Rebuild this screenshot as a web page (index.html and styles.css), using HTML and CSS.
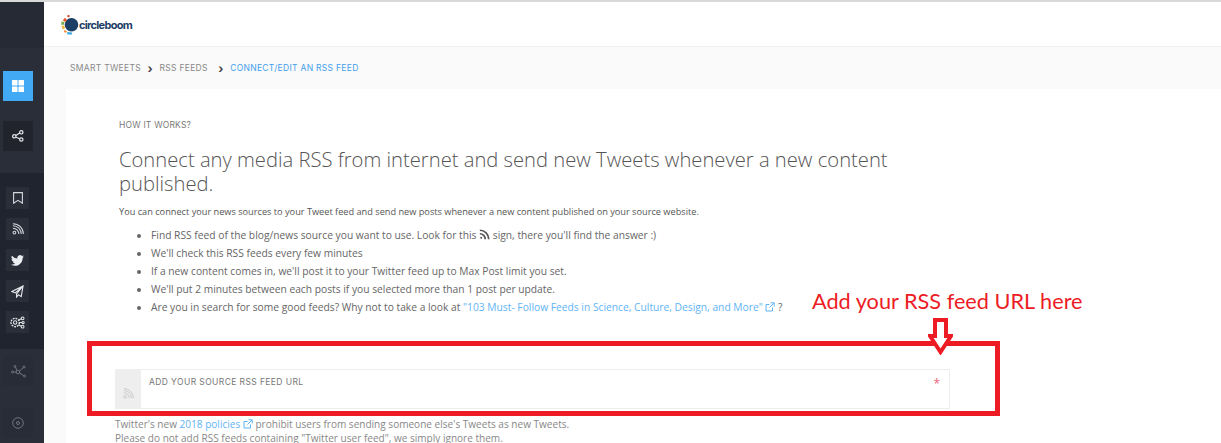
FILE: index.html
```html
<!DOCTYPE html>
<html lang="en">
<head>
    <meta charset="UTF-8">
    <title>Connect/Edit an RSS Feed</title>
    <link rel="stylesheet" href="styles.css">
</head>
<body>

<div class="app">
    <!-- Sidebar -->
    <aside class="sidebar">
        <div class="side-top"></div>
        <div class="side-main">
            <span class="side-btn active">
                <svg width="12" height="12" viewBox="0 0 12 12" fill="#fff"><rect x="0" y="0" width="5.500" height="5.500" rx=".5"/><rect x="6.500" y="0" width="5.500" height="5.500" rx=".5"/><rect x="0" y="6.500" width="5.500" height="5.500" rx=".5"/><rect x="6.500" y="6.500" width="5.500" height="5.500" rx=".5"/></svg>
            </span>
            <span class="side-btn">
                <svg width="12" height="12" viewBox="0 0 12 12" fill="none" stroke="#e4e6ea" stroke-width="1.200"><circle cx="2.300" cy="6.300" r="1.700"/><circle cx="9.300" cy="2.300" r="1.700"/><circle cx="9.300" cy="9.500" r="1.700"/><path d="M3.800 5.500l4-2.400M3.800 7.200l4 1.500"/></svg>
            </span>
        </div>
        <div class="side-sub">
            <span class="sub-btn">
                <svg width="10" height="12" viewBox="0 0 10 12" fill="none" stroke="#d5d7dc" stroke-width="1.100"><path d="M.6.6h8.800v10.600L5 8.300.6 11.200z"/></svg>
            </span>
            <span class="sub-btn">
                <svg width="12" height="12" viewBox="0 0 13 13" fill="none" stroke="#d5d7dc" stroke-width="1.100"><circle cx="2.600" cy="10.400" r="1.500"/><path d="M1 5.600a6.400 6.400 0 0 1 6.400 6.400M1 3a9 9 0 0 1 9 9M1 .7A11.300 11.300 0 0 1 12.300 12"/></svg>
            </span>
            <span class="sub-btn">
                <svg width="13" height="11" viewBox="0 0 24 20" fill="#eceef1"><path d="M24 2.400a10 10 0 0 1-2.800.8A5 5 0 0 0 23.300.5a10 10 0 0 1-3.100 1.200 4.900 4.900 0 0 0-8.400 4.500A14 14 0 0 1 1.700 1a4.900 4.900 0 0 0 1.500 6.600 5 5 0 0 1-2.200-.6c0 2.400 1.700 4.400 4 4.900a5 5 0 0 1-2.200.1 4.900 4.900 0 0 0 4.600 3.400A10 10 0 0 1 0 17.500 14 14 0 0 0 7.500 19.700c9 0 14-7.500 14-14v-.6A10 10 0 0 0 24 2.400z"/></svg>
            </span>
            <span class="sub-btn">
                <svg width="13" height="13" viewBox="0 0 14 14" fill="none" stroke="#e4e6ea" stroke-width="1.200"><path d="M13 1L1 7l3.500 1.500L13 1 6 9.500V13l2-2.500 3 2z"/></svg>
            </span>
            <span class="sub-btn">
                <svg width="15" height="13" viewBox="0 0 16 14" fill="none" stroke="#e4e6ea" stroke-width="1.100"><circle cx="5.500" cy="7" r="4.500" stroke-dasharray="2 1" stroke-width="1.500"/><circle cx="5.500" cy="7" r="1.800"/><circle cx="13.500" cy="2.500" r="1.500"/><circle cx="14" cy="7" r="1.200"/><circle cx="13.500" cy="11.500" r="1.500"/><path d="M9 4.500l3-1.500M10 7h2.800M9 9.500l3 1.500"/></svg>
            </span>
        </div>
        <div class="side-bottom">
            <span class="side-btn">
                <svg width="15" height="13" viewBox="0 0 15 13" fill="none" stroke="#70747e" stroke-width="1"><circle cx="7" cy="7" r="1.800"/><circle cx="1.500" cy="7" r="1"/><circle cx="13" cy="2" r="1"/><circle cx="13.500" cy="11" r="1"/><circle cx="4" cy="1.500" r="1"/><path d="M2.500 7h2.700M8.500 6l3.700-3.300M8.500 8l4 2.500M4.500 2.500l1.500 3"/></svg>
            </span>
            <span class="side-btn">
                <svg width="12" height="12" viewBox="0 0 12 12" fill="none" stroke="#70747e" stroke-width="1"><circle cx="6" cy="6" r="5.300"/><circle cx="6" cy="6" r="1.500"/></svg>
            </span>
        </div>
    </aside>

    <div class="content">
        <header class="topbar">
            <svg class="logo-mark" width="18" height="20" viewBox="0 0 18 20">
                <circle cx="10.500" cy="9.800" r="6.800" fill="#1c3f66"/>
                <path d="M3.800 2.800L6 4.800 4.400 7 1.800 5.400z" fill="#e8562a"/>
                <path d="M6.500 0l2.200.3-.2 2-2.200-.2z" fill="#d8452c"/>
                <path d="M.5 6.500l2.800.6-.2 2.700H.2z" fill="#76b043"/>
                <path d="M.4 10.800h2.800l.8 2.500-2.300 1.200z" fill="#f3b43a"/>
                <path d="M3.500 15l2.300 1.300L5 18 2.800 16.500z" fill="#f08a2c"/>
                <path d="M6.500 17l4.800.5-.8 2.300-4.500-.6z" fill="#3fa9e0"/>
            </svg>
            <span class="logo-text">circleboom</span>
        </header>

        <nav class="crumbs">
            <span>Smart Tweets</span>
            <span class="crumb-sep">&#8250;</span>
            <span>RSS Feeds</span>
            <span class="crumb-sep wide">&#8250;</span>
            <span class="crumb-current">Connect/Edit an RSS Feed</span>
        </nav>

        <main class="card">
            <div class="card-label">How it works?</div>
            <h1>Connect any media RSS from internet and send new Tweets whenever a new content published.</h1>
            <p class="lead">You can connect your news sources to your Tweet feed and send new posts whenever a new content published on your source website.</p>
            <ul class="steps">
                <li>Find RSS feed of the blog/news source you want to use. Look for this
                    <svg class="rss-inline" width="11" height="11" viewBox="0 0 13 13" fill="none" stroke="#555" stroke-width="2"><circle cx="2.600" cy="10.400" r="1.200" fill="#555" stroke="none"/><path d="M1 5.600a6.400 6.400 0 0 1 6.400 6.400M1 1.500A10.500 10.500 0 0 1 11.500 12"/></svg>
                    sign, there you'll find the answer :)</li>
                <li>We'll check this RSS feeds every few minutes</li>
                <li>If a new content comes in, we'll post it to your Twitter feed up to Max Post limit you set.</li>
                <li>We'll put 2 minutes between each posts if you selected more than 1 post per update.</li>
                <li>Are you in search for some good feeds? Why not to take a look at <a href="#">"103 Must- Follow Feeds in Science, Culture, Design, and More"
                    <svg class="ext" width="10" height="10" viewBox="0 0 10 10" fill="none" stroke="#5fb4f5" stroke-width="1"><path d="M7.500 5.500v3.500H1V2.500h3.500M5.500.8h3.700v3.700M9 1L4.500 5.500"/></svg></a> ?</li>
            </ul>

            <div class="field">
                <span class="field-addon">
                    <svg width="11" height="11" viewBox="0 0 13 13" fill="none" stroke="#c4c4c4" stroke-width="1"><circle cx="2.600" cy="10.400" r="1.600"/><path d="M1 5.600a6.400 6.400 0 0 1 6.400 6.400M1 3a9 9 0 0 1 9 9M1 .7A11.300 11.300 0 0 1 12.300 12"/></svg>
                </span>
                <label class="field-label">Add your source RSS feed URL</label>
                <span class="field-star">*</span>
            </div>

            <p class="note">Twitter's new <a href="#">2018 policies
                <svg class="ext" width="10" height="10" viewBox="0 0 10 10" fill="none" stroke="#5fb4f5" stroke-width="1"><path d="M7.500 5.500v3.500H1V2.500h3.500M5.500.8h3.700v3.700M9 1L4.500 5.500"/></svg></a> prohibit users from sending someone else's Tweets as new Tweets.<br>Please do not add RSS feeds containing "Twitter user feed", we simply ignore them.</p>
        </main>
    </div>
</div>

<!-- Annotations drawn on top of the screenshot -->
<div class="note-text">Add your RSS feed URL here</div>
<div class="note-box"></div>
<svg class="note-arrow" width="25" height="37" viewBox="0 0 25 37" fill="#fff" stroke="#ed1c24" stroke-width="4"><path d="M7 2h11v16h5L12.500 34 2 18h5z"/></svg>

</body>
</html>
```

FILE: styles.css
```css
html, body {
    margin: 0;
    padding: 0;
    height: 443px;
    overflow: hidden;
}

body {
    position: relative;
    font-family: "Open Sans", sans-serif;
    background-color: #fff;
    color: #666;
    border-top: 2px solid #d9d9d9;
    box-sizing: border-box;
}

.app {
    display: flex;
    height: 441px;
}

/* Sidebar */
.sidebar {
    width: 44px;
    flex-shrink: 0;
    display: flex;
    flex-direction: column;
    background-color: #2a2e39;
}

.side-top {
    height: 46px;
    background-color: #262a34;
}

.side-btn {
    width: 30px;
    height: 30px;
    display: flex;
    align-items: center;
    justify-content: center;
    background-color: #21242d;
}

.side-btn.active {
    background-color: #42aaf5;
}

.side-main {
    display: flex;
    flex-direction: column;
    gap: 20px;
    padding: 23px 0 22px 3px;
}

.side-sub {
    display: flex;
    flex-direction: column;
    gap: 9px;
    padding: 14px 0 16px 6px;
    background-color: #20242e;
}

.sub-btn {
    width: 23px;
    height: 22px;
    display: flex;
    align-items: center;
    justify-content: center;
    background-color: #2a2e39;
}

.side-bottom {
    display: flex;
    flex-direction: column;
    gap: 22px;
    padding: 7px 0 0 3px;
}

.side-bottom .side-btn {
    background-color: #282c36;
}

/* Top bar */
.content {
    flex: 1;
    min-width: 0;
    background-color: #fafafa;
}

.topbar {
    height: 45px;
    display: flex;
    align-items: center;
    padding: 2px 0 0 17px;
    background-color: #fff;
    border-bottom: 1px solid #f1f1f1;
    box-sizing: border-box;
}

.logo-text {
    font-family: "Inter", sans-serif;
    font-size: 11px;
    font-weight: 700;
    letter-spacing: -0.700px;
    color: #1c3f66;
}

/* Breadcrumb */
.crumbs {
    height: 42px;
    display: flex;
    align-items: center;
    gap: 6.500px;
    padding-left: 26px;
    box-sizing: border-box;
    font-family: "Inter", sans-serif;
    font-size: 8.500px;
    letter-spacing: 0.300px;
    text-transform: uppercase;
    color: #888;
}

.crumb-sep {
    font-size: 12px;
    font-weight: 700;
    color: #444;
}

.crumb-sep.wide {
    margin-left: 4px;
}

.crumb-current {
    color: #42a0ec;
}

/* Main card */
.card {
    margin-left: 22px;
    height: 354px;
    padding: 31px 0 0 53px;
    background-color: #fff;
    box-sizing: border-box;
}

.card-label {
    font-family: "Inter", sans-serif;
    font-size: 8.500px;
    letter-spacing: 0.200px;
    text-transform: uppercase;
    color: #777;
}

h1 {
    width: 790px;
    margin: 17px 0 0;
    font-size: 20.200px;
    font-weight: 300;
    line-height: 24px;
    color: #555;
}

.lead {
    margin: 10px 0 0;
    font-size: 9.200px;
    line-height: 14px;
    color: #555;
}

.steps {
    margin: 7px 0 0;
    padding-left: 32px;
    font-size: 10.250px;
    line-height: 18px;
    color: #666;
}

.steps a, .note a {
    color: #5fb4f5;
    text-decoration: none;
}

.rss-inline, .ext {
    vertical-align: -1px;
}

/* Feed url field */
.field {
    width: 835px;
    height: 40px;
    margin: 53px 0 0 -4px;
    display: flex;
    border: 1px solid #eeeeee;
    box-sizing: border-box;
}

.field-addon {
    width: 25px;
    flex-shrink: 0;
    display: flex;
    align-items: center;
    justify-content: center;
    padding-top: 9px;
    box-sizing: border-box;
    background-color: #eeeeee;
}

.field-label {
    flex: 1;
    padding: 7px 0 0 8px;
    font-family: "Inter", sans-serif;
    font-size: 8.500px;
    letter-spacing: 0.400px;
    text-transform: uppercase;
    color: #777;
}

.field-star {
    padding: 5px 9px 0 0;
    font-size: 12px;
    color: #f0647a;
}

.note {
    margin: 8px 0 0 -4px;
    font-size: 10.050px;
    line-height: 14px;
    color: #888;
}

/* Red annotations */
.note-text {
    position: absolute;
    left: 812px;
    top: 286px;
    font-family: "Lato", sans-serif;
    font-size: 21.700px;
    color: #ed1c24;
    white-space: nowrap;
}

.note-arrow {
    position: absolute;
    left: 928px;
    top: 316px;
}

.note-box {
    position: absolute;
    left: 87px;
    top: 339px;
    width: 913px;
    height: 75px;
    border: 5px solid #ed1c24;
    box-sizing: border-box;
}
```
